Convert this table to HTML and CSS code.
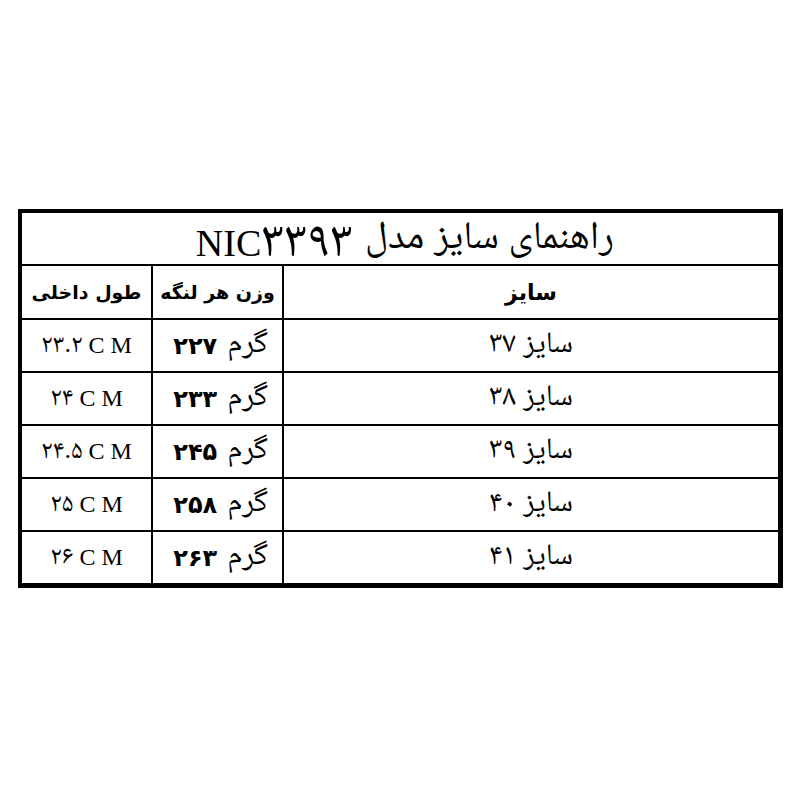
FILE: index.html
```html
<!DOCTYPE html>
<html lang="fa">
<head>
<meta charset="utf-8">
<link rel="stylesheet" href="styles.css">
</head>
<body>
<div class="page">
  <div class="chart" dir="rtl">
    <div class="cell title">راهنمای سایز مدل <span class="model">NIC<span class="num">۳۳۹۳</span></span></div>
    <div class="cell head head-size">سایز</div>
    <div class="cell head">وزن هر لنگه</div>
    <div class="cell head">طول داخلی</div>

    <div class="cell size">سایز ۳۷</div>
    <div class="cell weight"><span class="unit">گرم</span><b>۲۲۷</b></div>
    <div class="cell len" dir="ltr"><span class="fa">۲۳.۲</span> C M</div>

    <div class="cell size">سایز ۳۸</div>
    <div class="cell weight"><span class="unit">گرم</span><b>۲۳۳</b></div>
    <div class="cell len" dir="ltr"><span class="fa">۲۴</span> C M</div>

    <div class="cell size">سایز ۳۹</div>
    <div class="cell weight"><span class="unit">گرم</span><b>۲۴۵</b></div>
    <div class="cell len" dir="ltr"><span class="fa">۲۴.۵</span> C M</div>

    <div class="cell size">سایز ۴۰</div>
    <div class="cell weight"><span class="unit">گرم</span><b>۲۵۸</b></div>
    <div class="cell len" dir="ltr"><span class="fa">۲۵</span> C M</div>

    <div class="cell size">سایز ۴۱</div>
    <div class="cell weight"><span class="unit">گرم</span><b>۲۶۳</b></div>
    <div class="cell len" dir="ltr"><span class="fa">۲۶</span> C M</div>
  </div>
</div>
</body>
</html>
```

FILE: styles.css
```css
html, body {
  margin: 0;
  padding: 0;
  background: #fff;
}
.page {
  padding: 209px 0 0 18px;
}
.chart {
  width: 756px;
  display: grid;
  grid-template-columns: 494px 129px 129px;
  grid-template-rows: 51px 52px repeat(5, 51px);
  gap: 2px;
  background: #000;
  border: 4px solid #000;
  border-right-width: 5px;
  border-bottom-width: 5px;
  font-family: "Liberation Serif", "Noto Naskh Arabic", "DejaVu Sans", serif;
  color: #000;
}
.cell {
  background: #fff;
  display: flex;
  align-items: center;
  justify-content: center;
  white-space: nowrap;
}
.title {
  grid-column: 1 / -1;
  font-size: 39px;
  padding-top: 2px;
  padding-left: 10px;
}
.title .model {
  margin-right: 12px;
  font-size: 38px;
}
.title .num {
  font-size: 51px;
  line-height: 1;
}
.head {
  font-family: "DejaVu Sans", sans-serif;
  font-weight: bold;
  font-size: 19px;
}
.head-size {
  font-size: 22px;
}
.size {
  font-size: 30px;
}
.weight {
  font-size: 24px;
  gap: 10px;
  padding-left: 6px;
}
.weight .unit {
  font-size: 31px;
}
.weight b {
  font-family: "DejaVu Sans", sans-serif;
  font-weight: bold;
}
.len {
  font-size: 24px;
}
.len .fa {
  font-size: 26px;
  margin-right: 6px;
}
```
